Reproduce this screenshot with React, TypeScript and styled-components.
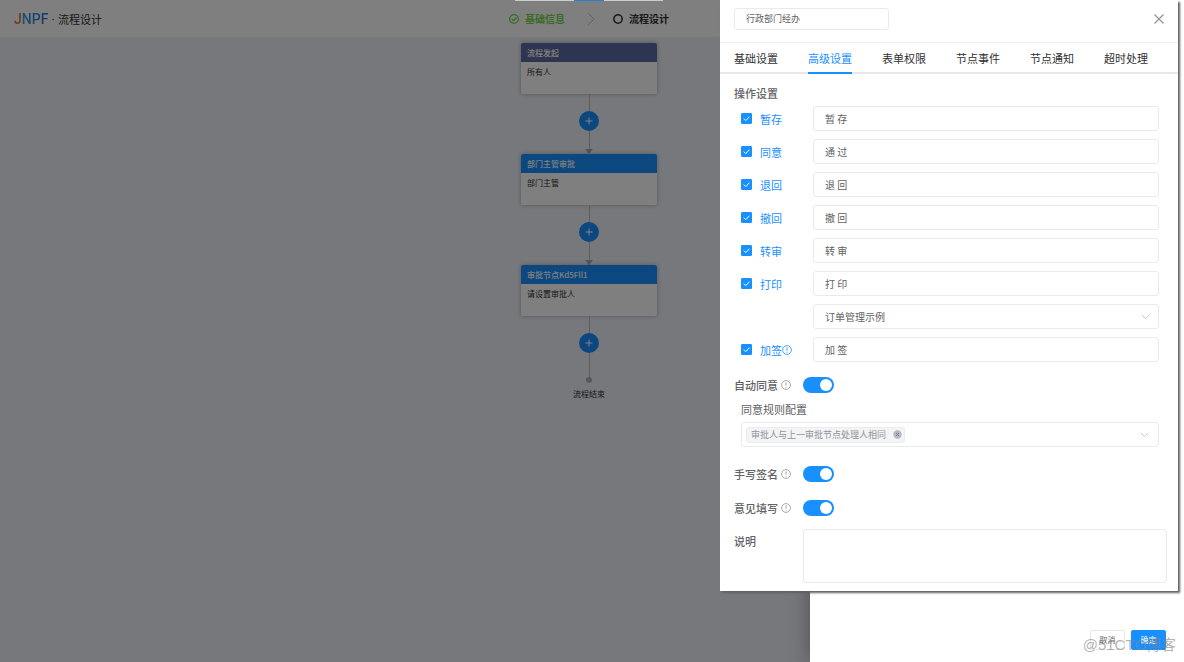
import React from "react";
import styled, { createGlobalStyle } from "styled-components";

const GlobalStyle = createGlobalStyle`
  *, *::before, *::after { box-sizing: border-box; }
  body {
    margin: 0;
    font-family: "Noto Sans CJK SC", "Liberation Sans", sans-serif;
    font-size: 11px;
    line-height: 16px;
    color: #606266;
  }
  button, input, select, textarea { font: inherit; color: inherit; margin: 0; }
  button { cursor: pointer; padding: 0; border: 0; background: none; }
`;

const blue = "#1890ff";
const line = "#e8eaf0";

const Page = styled.div`
  position: relative;
  min-height: 100vh;
  overflow: hidden;
  background: #eef0f8;
`;

/* ---------- designer behind the mask ---------- */

const TopBar = styled.header`
  display: grid;
  grid-template-columns: 1fr auto 1fr;
  align-items: center;
  height: 37px;
  padding: 0 20px 0 14px;
  background: #fff;
`;

const Brand = styled.div`
  display: flex;
  align-items: center;
  gap: 3px;
  color: #303133;
`;

const Logo = styled.span`
  font-family: Roboto, sans-serif;
  font-size: 14px;
  font-weight: 500;
  background: linear-gradient(90deg, #f06a2a 22%, #35a5e8 24%, #2a6fd0);
  background-clip: text;
  color: transparent;
`;

const BrandDot = styled.span`
  font-family: "Liberation Sans", sans-serif;
`;

const Steps = styled.ol`
  display: flex;
  align-items: center;
  margin: 0;
  padding: 0;
  list-style: none;
  font-size: 10px;
  font-weight: 700;
`;

const Step = styled.li<{ $done?: boolean }>`
  display: flex;
  align-items: center;
  gap: 6px;
  color: ${(p) => (p.$done ? "#6fd845" : "#303133")};
`;

const StepArrow = styled.svg`
  display: block;
  margin: 0 18px 0 22px;
`;

const Flow = styled.main`
  display: flex;
  flex-direction: column;
  align-items: center;
  padding: 6px 6px 40px 0;
`;

const Node = styled.section`
  width: 136px;
  height: 51px;
  border-radius: 2px;
  overflow: hidden;
  background: #fff;
  box-shadow: 0 0 4px rgba(0, 0, 0, 0.3);
  font-size: 8px;
  line-height: 19px;
`;

const NodeHead = styled.h3<{ $start?: boolean }>`
  margin: 0;
  padding: 0 6px;
  font-size: 8px;
  font-weight: 500;
  color: #fff;
  background: ${(p) => (p.$start ? "#5c6ba0" : blue)};
`;

const NodeBody = styled.p`
  margin: 0;
  padding: 0 6px;
  color: #303133;
`;

const Stem = styled.span<{ $h: number }>`
  width: 1px;
  height: ${(p) => p.$h}px;
  background: #b4b8c8;
`;

const Arrow = styled.span`
  border: 4px solid transparent;
  border-top: 5px solid #a4a9bc;
  border-bottom: 0;
`;

const AddButton = styled.button`
  display: flex;
  align-items: center;
  justify-content: center;
  width: 20px;
  height: 20px;
  border-radius: 50%;
  color: #fff;
  background: ${blue};
`;

const EndDot = styled.span`
  width: 6px;
  height: 6px;
  border-radius: 50%;
  background: #a9afc6;
`;

const EndText = styled.span`
  margin-top: 3px;
  font-size: 8px;
  color: #303133;
`;

const Mask = styled.div`
  position: absolute;
  inset: 0;
  background: rgba(0, 0, 0, 0.5);
`;

const LoadStrip = styled.div`
  position: absolute;
  top: 0;
  left: 0;
  right: 6px;
  display: flex;
  justify-content: center;

  &::before {
    content: "";
    width: 148px;
    height: 1px;
    background: linear-gradient(90deg, #ccc 40%, #2a80cc 40% 60%, #ccc 60%);
  }
`;

/* ---------- drawers ---------- */

const Drawer = styled.aside`
  position: absolute;
  top: 0;
  right: 0;
  bottom: 0;
  display: flex;
  align-items: flex-end;
  justify-content: flex-end;
  gap: 6px;
  width: min(374px, 100%);
  padding: 12px 18px;
  background: #fff;
  box-shadow: 0 0 20px rgba(0, 0, 0, 0.35);
`;

const ActionButton = styled.button<{ $primary?: boolean }>`
  width: 35px;
  height: 20px;
  border: 1px solid ${(p) => (p.$primary ? blue : "#e4e6ea")};
  border-radius: 2px;
  font-size: 8px;
  color: ${(p) => (p.$primary ? "#fff" : "#606266")};
  background: ${(p) => (p.$primary ? blue : "#fff")};
`;

const Watermark = styled.span`
  position: absolute;
  right: 8px;
  bottom: 6px;
  font-family: "Liberation Sans", "Noto Sans CJK SC", sans-serif;
  font-size: 15px;
  line-height: 22px;
  color: rgba(130, 130, 130, 0.6);
  pointer-events: none;
`;

const Panel = styled.section`
  position: absolute;
  top: 0;
  right: 6px;
  width: min(458px, 100%);
  background: #fff;
  box-shadow: 2px 2px 2px #606066;
`;

const PanelHead = styled.header`
  display: flex;
  align-items: center;
  justify-content: space-between;
  height: 43px;
  padding: 0 14px 5px;
  border-bottom: 1px solid #eef0f3;
`;

const TextField = styled.input`
  width: 100%;
  height: 25px;
  padding: 0 11px;
  border: 1px solid ${line};
  border-radius: 3px;
  outline: 0;
  background: #fff;
  font-size: 10px;
`;

const NameField = styled(TextField)`
  width: 155px;
  height: 22px;
  font-size: 9px;
`;

const CloseButton = styled.button`
  display: flex;
  color: #909399;
`;

const Tabs = styled.nav`
  display: flex;
  gap: 30px;
  height: 31px;
  padding: 0 14px;
  box-shadow: inset 0 -2px 0 #e6e8ee;
`;

const Tab = styled.button<{ $active?: boolean }>`
  border-bottom: 2px solid ${(p) => (p.$active ? blue : "transparent")};
  white-space: nowrap;
  color: ${(p) => (p.$active ? blue : "#303133")};
`;

const Form = styled.form`
  padding: 11px 11px 8px 14px;
`;

const GroupTitle = styled.h2`
  margin: 0 0 5px;
  font-size: 11px;
  font-weight: 500;
`;

const Options = styled.div`
  display: grid;
  gap: 8px;
  padding: 0 8px 0 7px;
`;

const OptionRow = styled.div`
  display: grid;
  grid-template-columns: 72px 1fr;
  align-items: center;
`;

const CheckLabel = styled.label`
  display: flex;
  align-items: center;
  color: ${blue};
`;

const Check = styled.input.attrs({ type: "checkbox" })`
  appearance: none;
  width: 11px;
  height: 11px;
  margin-right: 8px;
  border: 1px solid ${blue};
  border-radius: 1px;

  &:checked {
    background: ${blue}
      url("data:image/svg+xml,%3Csvg xmlns='http://www.w3.org/2000/svg' viewBox='0 0 9 9'%3E%3Cpath d='M1.8 4.6l2 2 3.6-3.9' fill='none' stroke='%23fff'/%3E%3C/svg%3E");
  }
`;

const SelectWrap = styled.div`
  position: relative;
  grid-column: 2;
`;

const Select = styled.select`
  display: block;
  appearance: none;
  width: 100%;
  height: 25px;
  padding: 0 11px;
  border: 1px solid ${line};
  border-radius: 3px;
  background: #fff;
  font-size: 10px;
`;

const SelectIcon = styled.span`
  position: absolute;
  top: 0;
  right: 9px;
  display: flex;
  align-items: center;
  height: 100%;
  pointer-events: none;
`;

const SwitchRow = styled.div`
  display: grid;
  grid-template-columns: 69px auto;
  justify-content: start;
  align-items: center;
  margin-top: 15px;

  & + & {
    margin-top: 18px;
  }
`;

const SwitchLabel = styled.label`
  display: flex;
  align-items: center;
  gap: 3px;
  font-weight: 500;

  svg {
    color: #909399;
  }
`;

const Switch = styled.input.attrs({ type: "checkbox", role: "switch" })`
  appearance: none;
  display: flex;
  align-items: center;
  width: 31px;
  height: 16px;
  padding: 0 2px;
  border-radius: 8px;
  background: #dcdfe6;

  &::before {
    content: "";
    width: 12px;
    height: 12px;
    border-radius: 50%;
    background: #fff;
  }

  &:checked {
    justify-content: flex-end;
    background: ${blue};
  }
`;

const Rule = styled.div`
  padding: 8px 8px 4px 7px;
`;

const RuleTitle = styled.div`
  margin-bottom: 5px;
`;

const TagSelect = styled.div`
  position: relative;
  display: flex;
  align-items: center;
  height: 25px;
  padding: 0 4px;
  border: 1px solid ${line};
  border-radius: 3px;
`;

const Tag = styled.span`
  display: flex;
  align-items: center;
  gap: 7px;
  height: 16px;
  padding: 0 2px 0 4px;
  border: 1px solid #ebecef;
  border-radius: 3px;
  background: #f3f4f5;
  font-size: 9px;
  color: #909399;
`;

const TagClose = styled.button`
  display: flex;
`;

const NoteRow = styled.div`
  display: grid;
  grid-template-columns: 69px 1fr;
  margin-top: 13px;
`;

const NoteLabel = styled.label`
  padding-top: 4px;
  font-weight: 500;
`;

const NoteField = styled.textarea`
  display: block;
  width: 100%;
  height: 54px;
  padding: 6px 11px;
  border: 1px solid ${line};
  border-radius: 3px;
  outline: 0;
  resize: none;
`;

/* ---------- icons ---------- */

const InfoIcon = () => (
  <svg width="10" height="10" viewBox="0 0 10 10" fill="none" stroke="currentColor" strokeWidth="0.8">
    <circle cx="5" cy="5" r="4.4" />
    <path d="M5 2.4v3.3M5 6.7v1" />
  </svg>
);

const ChevronDown = () => (
  <svg width="9" height="6" viewBox="0 0 9 6" fill="none" stroke="#c0c4cc">
    <path d="M0.7 0.9l3.8 3.8 3.8-3.8" />
  </svg>
);

const PlusIcon = () => (
  <svg width="8" height="8" viewBox="0 0 8 8" fill="none" stroke="currentColor">
    <path d="M4 0.5v7M0.5 4h7" />
  </svg>
);

/* ---------- data ---------- */

const nodes = [
  { title: "流程发起", body: "所有人", start: true },
  { title: "部门主管审批", body: "部门主管" },
  { title: "审批节点Kd5Fll1", body: "请设置审批人" },
];

const tabs = ["基础设置", "高级设置", "表单权限", "节点事件", "节点通知", "超时处理"];

const options = [
  { label: "暂存", value: "暂 存" },
  { label: "同意", value: "通 过" },
  { label: "退回", value: "退 回" },
  { label: "撤回", value: "撤 回" },
  { label: "转审", value: "转 审" },
  { label: "打印", value: "打 印", template: "订单管理示例" },
  { label: "加签", value: "加 签", info: true },
];

const SwitchField = ({ id, label }: { id: string; label: string }) => (
  <SwitchRow>
    <SwitchLabel htmlFor={id}>
      {label}
      <InfoIcon />
    </SwitchLabel>
    <Switch id={id} defaultChecked />
  </SwitchRow>
);

export default function App() {
  return (
    <Page>
      <GlobalStyle />
      <TopBar>
        <Brand>
          <Logo>JNPF</Logo>
          <BrandDot>·</BrandDot>
          <span>流程设计</span>
        </Brand>
        <Steps>
          <Step $done>
            <svg width="10" height="10" viewBox="0 0 10 10" fill="none" stroke="currentColor" strokeWidth="1.2">
              <circle cx="5" cy="5" r="4.4" />
              <path d="M2.8 5l1.7 1.7 2.9-3.2" />
            </svg>
            基础信息
          </Step>
          <li aria-hidden="true">
            <StepArrow width="8" height="14" viewBox="0 0 8 14" fill="none" stroke="#c0c4cc">
              <path d="M1 1l6 6-6 6" />
            </StepArrow>
          </li>
          <Step>
            <svg width="10" height="10" viewBox="0 0 10 10" fill="none" stroke="currentColor" strokeWidth="1.5">
              <circle cx="5" cy="5" r="4.2" />
            </svg>
            流程设计
          </Step>
        </Steps>
      </TopBar>

      <Flow>
        {nodes.map((n, i) => (
          <React.Fragment key={n.title}>
            <Node>
              <NodeHead $start={n.start}>{n.title}</NodeHead>
              <NodeBody>{n.body}</NodeBody>
            </Node>
            <Stem $h={17} />
            <AddButton type="button" aria-label="添加节点">
              <PlusIcon />
            </AddButton>
            {i < nodes.length - 1 ? (
              <>
                <Stem $h={18} />
                <Arrow />
              </>
            ) : (
              <Stem $h={24} />
            )}
          </React.Fragment>
        ))}
        <EndDot />
        <EndText>流程结束</EndText>
      </Flow>

      <Mask />
      <LoadStrip />

      <Drawer>
        <ActionButton type="button">取消</ActionButton>
        <ActionButton type="button" $primary>
          确定
        </ActionButton>
        <Watermark>@51CTO博客</Watermark>
      </Drawer>

      <Panel>
        <PanelHead>
          <NameField aria-label="节点名称" defaultValue="行政部门经办" />
          <CloseButton type="button" aria-label="关闭">
            <svg width="10" height="10" viewBox="0 0 10 10" fill="none" stroke="currentColor" strokeWidth="1.2">
              <path d="M0.5 0.5l9 9M9.5 0.5l-9 9" />
            </svg>
          </CloseButton>
        </PanelHead>
        <Tabs>
          {tabs.map((t, i) => (
            <Tab key={t} type="button" $active={i === 1}>
              {t}
            </Tab>
          ))}
        </Tabs>
        <Form>
          <GroupTitle>操作设置</GroupTitle>
          <Options>
            {options.map((o) => (
              <React.Fragment key={o.label}>
                <OptionRow>
                  <CheckLabel>
                    <Check defaultChecked />
                    {o.label}
                    {o.info && <InfoIcon />}
                  </CheckLabel>
                  <TextField aria-label={o.label + "按钮名称"} defaultValue={o.value} />
                </OptionRow>
                {o.template && (
                  <OptionRow>
                    <SelectWrap>
                      <Select aria-label="打印模板" defaultValue={o.template}>
                        <option>{o.template}</option>
                      </Select>
                      <SelectIcon>
                        <ChevronDown />
                      </SelectIcon>
                    </SelectWrap>
                  </OptionRow>
                )}
              </React.Fragment>
            ))}
          </Options>

          <SwitchField id="auto-agree" label="自动同意" />
          <Rule>
            <RuleTitle id="rule-title">同意规则配置</RuleTitle>
            <TagSelect role="group" aria-labelledby="rule-title">
              <Tag>
                审批人与上一审批节点处理人相同
                <TagClose type="button" aria-label="移除">
                  <svg width="9" height="9" viewBox="0 0 9 9">
                    <circle cx="4.5" cy="4.5" r="4.2" fill="#b4b8c0" />
                    <path d="M3 3l3 3M6 3l-3 3" stroke="#7d828c" />
                  </svg>
                </TagClose>
              </Tag>
              <SelectIcon>
                <ChevronDown />
              </SelectIcon>
            </TagSelect>
          </Rule>
          <SwitchField id="signature" label="手写签名" />
          <SwitchField id="opinion" label="意见填写" />
          <NoteRow>
            <NoteLabel htmlFor="note">说明</NoteLabel>
            <NoteField id="note" />
          </NoteRow>
        </Form>
      </Panel>
    </Page>
  );
}
